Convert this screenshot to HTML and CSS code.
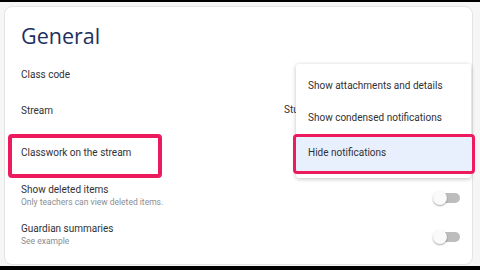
FILE: index.html
```html
<!DOCTYPE html>
<html lang="en">
<head>
  <meta charset="UTF-8">
  <title>Class settings - General</title>
  <link rel="stylesheet" href="styles.css">
</head>
<body>
  <div class="page">
    <div class="settings-card">
      <h2 class="card-title">General</h2>

      <div class="setting-row">
        <span class="setting-label">Class code</span>
      </div>

      <div class="setting-row">
        <span class="setting-label">Stream</span>
        <span class="setting-value">Stu</span>
      </div>

      <div class="setting-row tall">
        <span class="setting-label">Classwork on the stream</span>
      </div>

      <div class="setting-row two-line">
        <div>
          <div class="setting-label">Show deleted items</div>
          <div class="setting-hint">Only teachers can view deleted items.</div>
        </div>
        <span class="toggle"></span>
      </div>

      <div class="setting-row two-line last">
        <div>
          <div class="setting-label">Guardian summaries</div>
          <div class="setting-hint">See example</div>
        </div>
        <span class="toggle"></span>
      </div>

      <!-- dropdown opened from the stream setting -->
      <ul class="dropdown">
        <li>Show attachments and details</li>
        <li>Show condensed notifications</li>
        <li class="selected">Hide notifications</li>
      </ul>

      <!-- highlight annotation -->
      <div class="highlight row-highlight"></div>
    </div>
  </div>
</body>
</html>
```

FILE: styles.css
```css
* {
  box-sizing: border-box;
}

body {
  margin: 0;
  background-color: #000;
  font-family: Roboto, 'Liberation Sans', sans-serif;
  color: #303134;
}

.page {
  margin-top: 2px;
  height: 264px;
  background-color: #f6f6f6;
  padding: 4px 7px 1px 4px;
}

.settings-card {
  position: relative;
  height: 100%;
  background-color: #fff;
  border: 1px solid #e4e4e4;
  border-radius: 8px;
  padding: 0 0 0 16px;
}

.card-title {
  margin: 0;
  height: 49px;
  padding-top: 14px;
  font-family: 'Open Sans', Lato, sans-serif;
  font-weight: 400;
  font-size: 21.5px;
  line-height: 30px;
  color: #22305e;
}

.setting-row {
  display: flex;
  align-items: center;
  justify-content: space-between;
  height: 36px;
  padding-right: 12px;
  font-size: 10px;
}

.setting-row.tall {
  height: 48px;
}

.setting-row.two-line {
  height: 38px;
}

.setting-row.last {
  height: 40px;
}

.setting-label {
  line-height: 13px;
}

.setting-value {
  position: absolute;
  left: 279px;
  top: 97px;
  white-space: nowrap;
}

.setting-hint {
  font-size: 8.5px;
  line-height: 12px;
  color: #8a8e93;
}

.toggle {
  position: relative;
  width: 20px;
  height: 10px;
  margin-top: 6px;
  border-radius: 5px;
  background-color: #bdbdbd;
}

.toggle::before {
  content: '';
  position: absolute;
  left: -7px;
  top: -2px;
  width: 14px;
  height: 14px;
  border-radius: 50%;
  background-color: #fafafa;
  box-shadow: 0 1px 2px rgba(0, 0, 0, 0.35);
}

.dropdown {
  position: absolute;
  left: 291px;
  top: 57px;
  width: 175px;
  margin: 0;
  padding: 6px 0 6px;
  list-style: none;
  background-color: #fff;
  border-radius: 3px;
  box-shadow: 0 1px 4px rgba(0, 0, 0, 0.25);
  font-size: 10px;
}

.dropdown li {
  height: 32px;
  line-height: 32px;
  padding-left: 12px;
}

.dropdown .selected {
  background-color: #e8effd;
  outline: 3px solid #ee1a5e;
  outline-offset: -1px;
  border-radius: 2px;
  margin: 2px -2px 0 -1px;
  padding-left: 13px;
  height: 36px;
  line-height: 34px;
}

.highlight {
  position: absolute;
  border: 4px solid #ee1a5e;
  border-radius: 4px;
}

.row-highlight {
  left: 3px;
  top: 127px;
  width: 154px;
  height: 44px;
}
```
